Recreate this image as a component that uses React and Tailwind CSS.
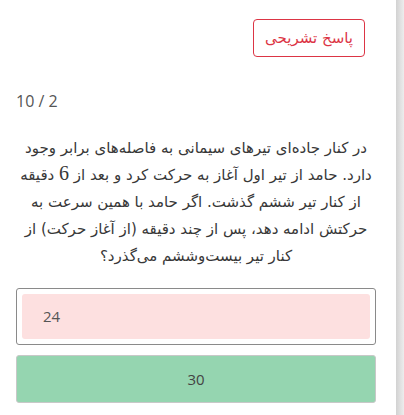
import React from 'react';

const fa = { fontFamily: '"DejaVu Sans", "Noto Sans", sans-serif' };

const App = () => {
  return (
    <div className="flex w-[404px] h-[415px] bg-white overflow-hidden">
      <div className="w-[396px] pl-4 pr-5 pt-[19px]" style={{ fontFamily: '"Open Sans", sans-serif' }}>
        <div className="flex justify-end pr-[11px]">
          <button
            dir="rtl"
            className="h-[38px] px-[11px] border border-[#dc3545] rounded text-[#dc3545] text-[15px]"
            style={fa}
          >
            پاسخ تشریحی
          </button>
        </div>

        <div className="mt-[34px] text-[16px] text-[#555] leading-5">10 / 2</div>

        <p
          dir="rtl"
          className="mt-[24px] text-center text-[15px] leading-[27px] text-[#383838]"
          style={fa}
        >
          در کنار جاده‌ای تیرهای سیمانی به فاصله‌های برابر وجود دارد. حامد از تیر اول آغاز به حرکت کرد و بعد از{' '}
          <span className="text-[20px] leading-none" style={{ fontFamily: '"Liberation Serif", serif' }}>6</span>{' '}
          دقیقه از کنار تیر ششم گذشت. اگر حامد با همین سرعت به حرکتش ادامه دهد، پس از چند دقیقه (از آغاز حرکت) از کنار تیر بیست‌وششم می‌گذرد؟
        </p>

        <div className="mt-[18px] border border-[#8a8a8a] rounded-[3px] p-[5px]">
          <div className="h-[45px] bg-[#fde0e0] rounded-[3px] flex items-center pl-[21px] text-[15px] text-[#555]">
            24
          </div>
        </div>

        <div className="mt-[10px] h-[48px] bg-[#95d5b0] border border-[#c8c8c8] rounded-[3px] flex items-center justify-center text-[15px] text-[#444]">
          30
        </div>
      </div>
      <div className="w-2 h-full bg-gradient-to-r from-[#d2d2d2] to-[#ededed]" />
    </div>
  );
};

export default App;
